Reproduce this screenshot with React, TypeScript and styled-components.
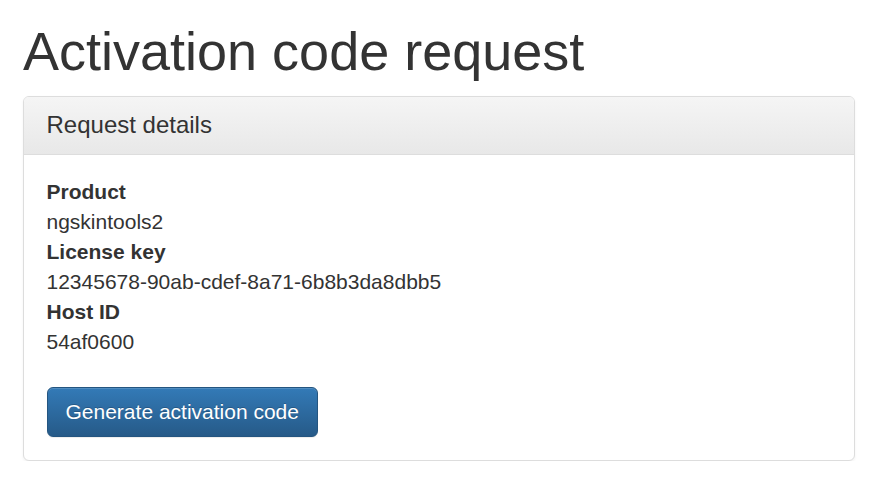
import React from "react";
import styled, { createGlobalStyle } from "styled-components";

const GlobalStyle = createGlobalStyle`
  html, body { margin: 0; padding: 0; background: #fff; }
  body {
    font-family: "Liberation Sans", Arial, Helvetica, sans-serif;
    font-size: 21px;
    line-height: 30px;
    color: #333;
  }
  * { box-sizing: border-box; }
`;

const Container = styled.div`
  padding: 0 30px 0 23px;
`;

const Title = styled.h1`
  font-size: 54px;
  font-weight: 500;
  line-height: 1.1;
  margin: 22px 0 15px;
  color: #333;
`;

const Panel = styled.section`
  background: #fff;
  border: 1px solid #ddd;
  border-radius: 6px;
  box-shadow: 0 1.5px 3px rgba(0, 0, 0, 0.05);
  overflow: hidden;
`;

const PanelHeading = styled.div`
  padding: 15px 22.5px;
  border-bottom: 1px solid #ddd;
  background-image: linear-gradient(to bottom, #f5f5f5 0, #e8e8e8 100%);
`;

const PanelTitle = styled.h3`
  margin: 0;
  font-size: 24px;
  font-weight: 500;
  line-height: 1.1;
  color: #333;
`;

const PanelBody = styled.div`
  padding: 22.5px;
`;

const DetailList = styled.dl`
  margin: 0 0 30px;
`;

const Term = styled.dt`
  font-weight: 700;
  line-height: 30px;
`;

const Desc = styled.dd`
  margin: 0;
  line-height: 30px;
`;

const PrimaryButton = styled.button`
  display: inline-block;
  font-family: inherit;
  font-size: 21px;
  line-height: 30px;
  padding: 9px 18px;
  color: #fff;
  border: 1px solid #245580;
  border-radius: 6px;
  background-image: linear-gradient(to bottom, #337ab7 0, #265a88 100%);
  text-shadow: 0 -1px 0 rgba(0, 0, 0, 0.2);
  box-shadow: inset 0 1px 0 rgba(255, 255, 255, 0.15), 0 1px 1px rgba(0, 0, 0, 0.075);
  cursor: pointer;
`;

const details = [
  { term: "Product", value: "ngskintools2" },
  { term: "License key", value: "12345678-90ab-cdef-8a71-6b8b3da8dbb5" },
  { term: "Host ID", value: "54af0600" },
];

export default function App() {
  return (
    <>
      <GlobalStyle />
      <Container>
        <Title>Activation code request</Title>
        <Panel>
          <PanelHeading>
            <PanelTitle>Request details</PanelTitle>
          </PanelHeading>
          <PanelBody>
            <DetailList>
              {details.map((d) => (
                <React.Fragment key={d.term}>
                  <Term>{d.term}</Term>
                  <Desc>{d.value}</Desc>
                </React.Fragment>
              ))}
            </DetailList>
            <PrimaryButton type="button">Generate activation code</PrimaryButton>
          </PanelBody>
        </Panel>
      </Container>
    </>
  );
}
